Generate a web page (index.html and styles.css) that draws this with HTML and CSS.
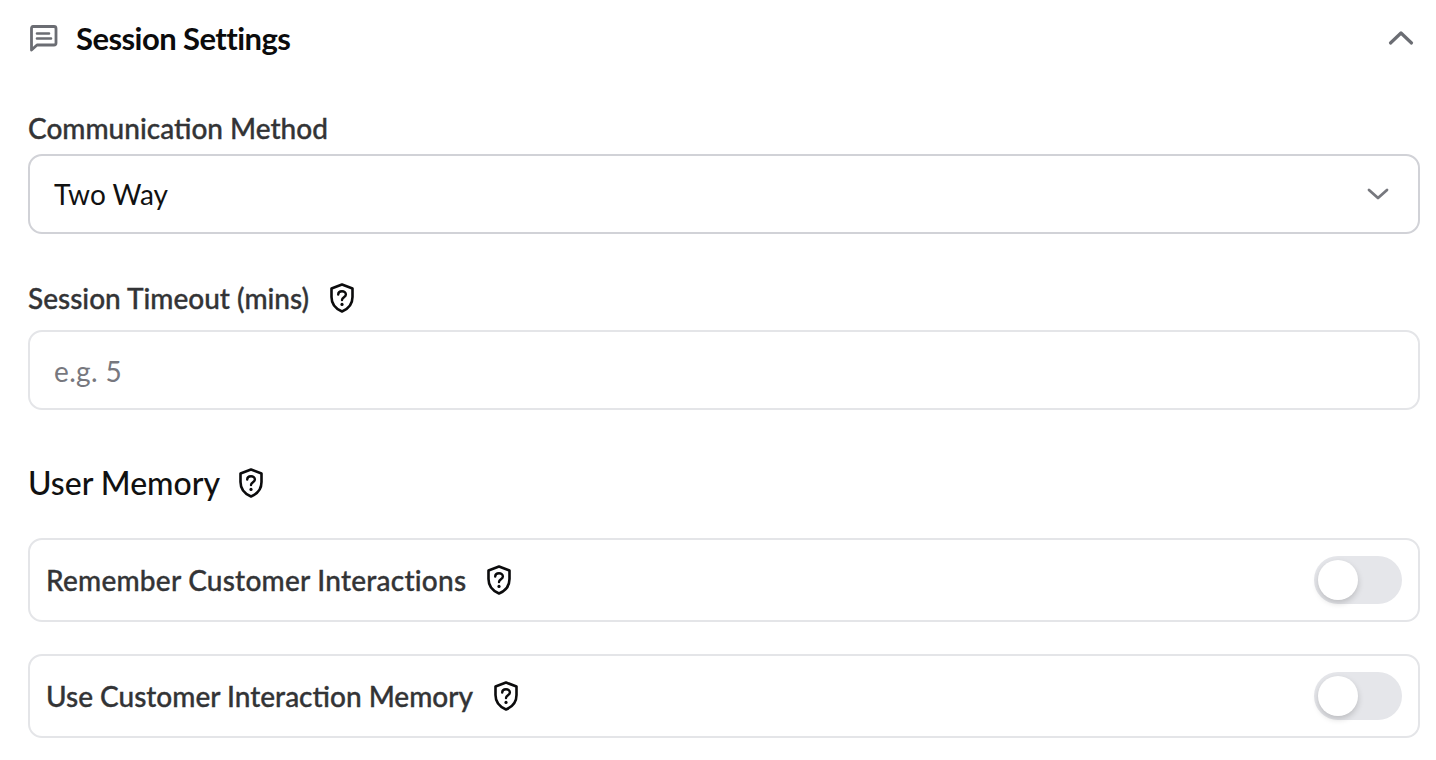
FILE: index.html
```html
<!DOCTYPE html>
<html lang="en">
<head>
  <meta charset="UTF-8">
  <title>Session Settings</title>
  <link rel="stylesheet" href="styles.css">
</head>
<body>
  <svg class="icon-defs" width="0" height="0">
    <symbol id="shield-help" viewBox="0 0 28 32">
      <path d="M14 2.5 L24.5 6.5 V15 C24.5 22 20 27 14 29.5 C8 27 3.5 22 3.5 15 V6.5 Z" fill="none" stroke="currentColor" stroke-width="2.6" stroke-linejoin="round"/>
      <path d="M10.2 12.6 C10.2 10.4 12 9.2 14 9.2 C16.2 9.2 17.9 10.6 17.9 12.6 C17.9 15.2 14 15.4 14 18" fill="none" stroke="currentColor" stroke-width="2.4" stroke-linecap="round"/>
      <circle cx="14" cy="22.4" r="1.6" fill="currentColor"/>
    </symbol>
  </svg>

  <!-- Header -->
  <div class="section-header">
    <div class="section-title">
      <svg class="chat-icon" width="30" height="28" viewBox="0 0 30 28">
        <path d="M5 2.5 H26 Q28 2.5 28 4.5 V19 Q28 21 26 21 H9 L3.5 26 V4.5 Q3.5 2.5 5 2.5 Z" fill="none" stroke="#6b6d73" stroke-width="2.8" stroke-linejoin="round"/>
        <path d="M9 9.5 H21 M9 14.5 H23" stroke="#6b6d73" stroke-width="2.6" stroke-linecap="round"/>
      </svg>
      <h1>Session Settings</h1>
    </div>
    <svg class="caret-up" width="26" height="16" viewBox="0 0 26 16">
      <path d="M2.5 13 L13 3 L23.5 13" fill="none" stroke="#6b6d73" stroke-width="3.2" stroke-linecap="round" stroke-linejoin="round"/>
    </svg>
  </div>

  <!-- Communication Method -->
  <div class="field field-method">
    <label class="field-label">Communication Method</label>
    <div class="select-box">
      <span>Two Way</span>
      <svg width="22" height="14" viewBox="0 0 22 14">
        <path d="M2 3 L11 11 L20 3" fill="none" stroke="#77787e" stroke-width="2.8" stroke-linecap="round" stroke-linejoin="round"/>
      </svg>
    </div>
  </div>

  <!-- Session Timeout -->
  <div class="field field-timeout">
    <label class="field-label">Session Timeout (mins)
      <svg class="help-icon"><use href="#shield-help"/></svg>
    </label>
    <div class="text-box"><span class="placeholder">e.g. 5</span></div>
  </div>

  <!-- User Memory -->
  <h2 class="memory-title">User Memory
    <svg class="help-icon"><use href="#shield-help"/></svg>
  </h2>
  <div class="toggle-row">
    <span class="field-label label-wide">Remember Customer Interactions
      <svg class="help-icon"><use href="#shield-help"/></svg>
    </span>
    <div class="toggle"><div class="knob"></div></div>
  </div>
  <div class="toggle-row">
    <span class="field-label">Use Customer Interaction Memory
      <svg class="help-icon"><use href="#shield-help"/></svg>
    </span>
    <div class="toggle"><div class="knob"></div></div>
  </div>
</body>
</html>
```

FILE: styles.css
```css
body {
  margin: 0;
  padding: 0 16px 0 28px;
  background-color: #fff;
  font-family: Lato, "Open Sans", sans-serif;
  color: #111;
}
.icon-defs {
  display: block;
}
.section-header {
  display: flex;
  align-items: center;
  justify-content: space-between;
  height: 76px;
  padding-right: 6px;
}
.section-title {
  display: flex;
  align-items: center;
  gap: 18px;
}
.chat-icon {
  flex: none;
}
h1 {
  margin: 0;
  font-size: 31px;
  font-weight: 700;
  letter-spacing: -0.55px;
  color: #0b0b0c;
}
.field-method {
  margin-top: 34px;
}
.field-timeout {
  margin-top: 46px;
}
.field-label {
  display: flex;
  align-items: center;
  gap: 19px;
  font-family: "Lato Medium", Lato, sans-serif;
  font-size: 28px;
  font-weight: 500;
  line-height: 36px;
  color: #333436;
  -webkit-text-stroke: 0.35px #333436;
}
.label-wide {
  letter-spacing: 0.24px;
}
.field-method .field-label {
  margin-bottom: 8px;
}
.field-timeout .field-label {
  margin-bottom: 14px;
}
.select-box, .text-box {
  display: flex;
  align-items: center;
  justify-content: space-between;
  box-sizing: border-box;
  height: 80px;
  padding: 0 29px 0 24px;
  border-radius: 14px;
  font-size: 28px;
}
.select-box {
  border: 2px solid #d1d2d7;
  color: #111;
}
.text-box {
  border: 2px solid #e4e5e8;
  color: #77787e;
}
.placeholder {
  padding-top: 2px;
  letter-spacing: 0.35px;
}
.help-icon {
  width: 28px;
  height: 32px;
  flex: none;
  color: #0b0b0c;
}
.memory-title {
  display: flex;
  align-items: center;
  gap: 17px;
  margin: 51px 0 33px;
  font-size: 32px;
  font-weight: 500;
  line-height: 44px;
  color: #111;
}
.toggle-row {
  display: flex;
  align-items: center;
  justify-content: space-between;
  box-sizing: border-box;
  height: 84px;
  margin-bottom: 32px;
  padding: 0 16px;
  border: 2px solid #e4e5e8;
  border-radius: 14px;
}
.toggle {
  width: 88px;
  height: 48px;
  padding: 4px;
  box-sizing: border-box;
  border-radius: 24px;
  background-color: #e5e6ea;
}
.knob {
  width: 40px;
  height: 40px;
  border-radius: 50%;
  background-color: #fff;
  box-shadow: 0 3px 6px rgba(0, 0, 0, 0.18);
}
```
